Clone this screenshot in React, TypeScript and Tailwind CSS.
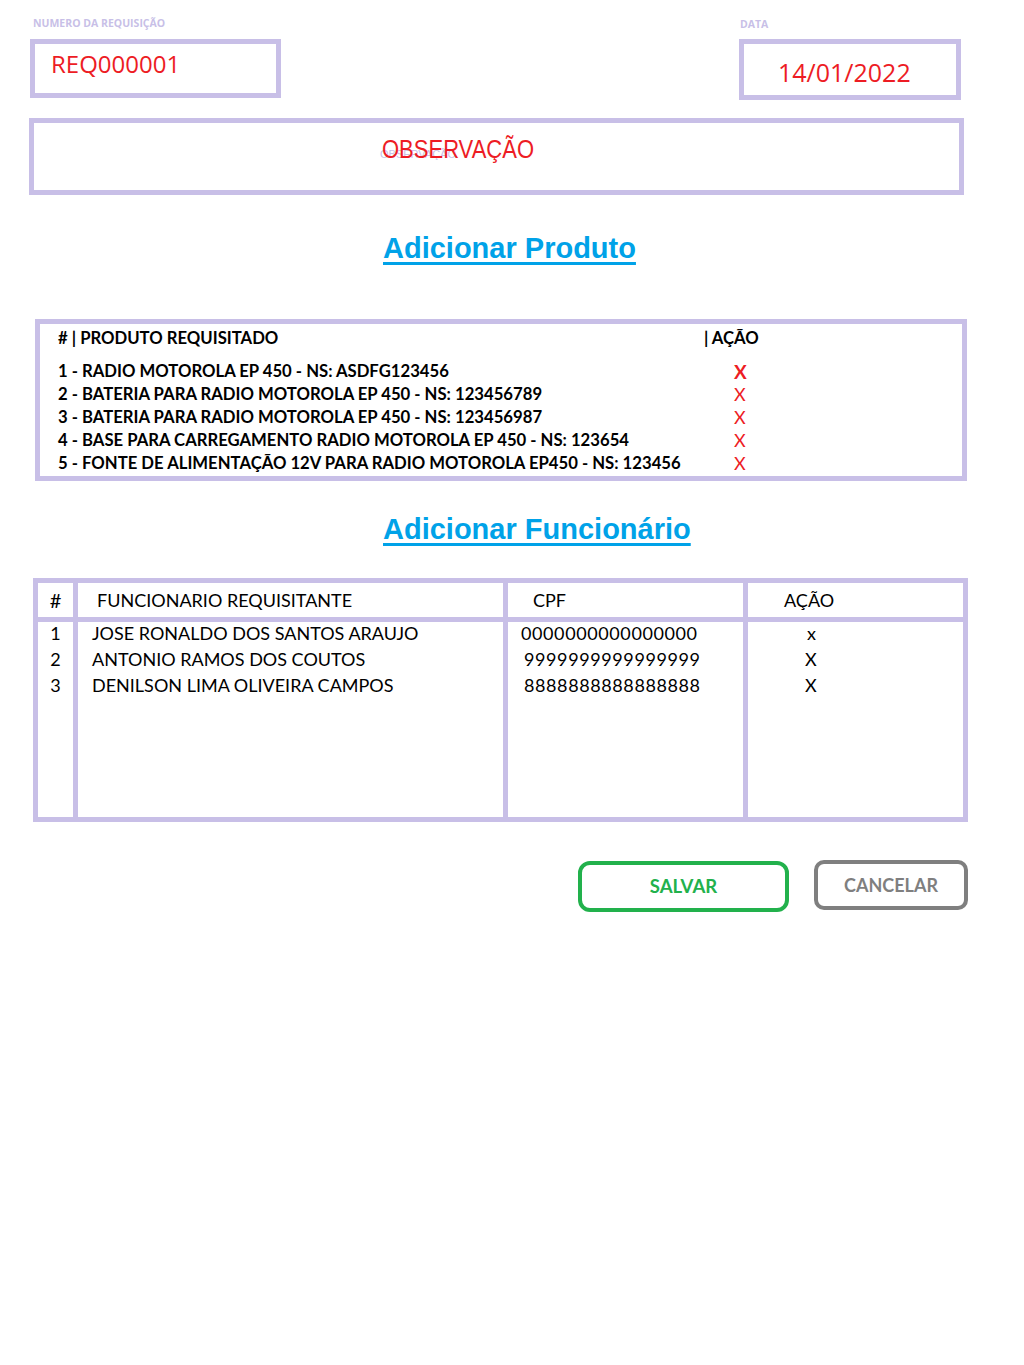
import React from "react";

const LAV = "border-[#c8bfe7]";

const produtos = [
  "1 - RADIO MOTOROLA EP 450 - NS: ASDFG123456",
  "2 - BATERIA PARA RADIO MOTOROLA EP 450 - NS: 123456789",
  "3 - BATERIA PARA RADIO MOTOROLA EP 450 - NS: 123456987",
  "4 - BASE PARA CARREGAMENTO RADIO MOTOROLA EP 450 - NS: 123654",
  "5 - FONTE DE ALIMENTAÇÃO 12V PARA RADIO MOTOROLA EP450 - NS: 123456",
];

const funcionarios = [
  { n: "1", nome: "JOSE RONALDO DOS SANTOS ARAUJO", cpf: "0000000000000000", x: "x", cpfPad: "pl-[13px]" },
  { n: "2", nome: "ANTONIO RAMOS DOS COUTOS", cpf: "9999999999999999", x: "X", cpfPad: "pl-[16px]" },
  { n: "3", nome: "DENILSON LIMA OLIVEIRA CAMPOS", cpf: "8888888888888888", x: "X", cpfPad: "pl-[16px]" },
];

export default function App() {
  return (
    <div className="w-[1024px] h-[1365px] bg-white text-black [font-family:Lato,'Open_Sans',sans-serif]">
      {/* top row */}
      <div className="flex pt-[17px]">
        <div className="ml-[30px] w-[251px]">
          <div className="pl-[3px] h-[13px] text-[10.5px] leading-[13px] font-bold text-[#c8bfe7] [font-family:'Open_Sans',sans-serif]">
            NUMERO DA REQUISIÇÃO
          </div>
          <div className={`mt-[9px] h-[59px] border-[5px] ${LAV} pl-[16px] pt-[4px]`}>
            <div className="text-[24px] leading-[32px] text-[#ed1c24] [font-family:'Open_Sans',sans-serif]">REQ000001</div>
          </div>
        </div>
        <div className="ml-[458px] w-[222px]">
          <div className="pl-[1px] pt-[1px] h-[13px] text-[10.5px] leading-[13px] font-bold text-[#c8bfe7] [font-family:'Open_Sans',sans-serif]">
            DATA
          </div>
          <div className={`mt-[9px] h-[61px] border-[5px] ${LAV} pl-[34px] pt-[12px]`}>
            <div className="text-[25px] leading-[32px] text-[#ed1c24] [font-family:'Open_Sans',sans-serif]">14/01/2022</div>
          </div>
        </div>
      </div>

      {/* observacao */}
      <div className={`relative mt-[18px] ml-[29px] w-[935px] h-[77px] border-[5px] ${LAV} pl-[348px] pt-[12px]`}>
        <div className="absolute left-[346px] top-[25px] text-[11px] leading-[12px] text-[#c8bfe7] [font-family:'Liberation_Sans',sans-serif]">
          OBSERVAÇÃO
        </div>
        <div className="relative origin-left scale-x-[0.88] text-[25px] leading-[28px] text-[#ed1c24] [font-family:'Liberation_Sans',Arial,sans-serif]">
          OBSERVAÇÃO
        </div>
      </div>

      {/* Adicionar Produto */}
      <div className="mt-[36px] ml-[383px] text-[29px] leading-[34px] font-bold text-[#00a2e8] underline underline-offset-[4px] decoration-[3px] [font-family:'Liberation_Sans',Arial,sans-serif]">
        Adicionar Produto
      </div>

      {/* Produtos table */}
      <div className={`mt-[54px] ml-[35px] w-[932px] h-[162px] border-[5px] ${LAV} pl-[18px] pt-[3px] font-bold text-[16.7px]`}>
        <div className="flex leading-[22px]">
          <div className="w-[646px]"># | PRODUTO REQUISITADO</div>
          <div>| AÇÃO</div>
        </div>
        <div className="mt-[11px]">
          {produtos.map((p, i) => (
            <div key={i} className="flex leading-[23px] h-[23px]">
              <div className="w-[646px] whitespace-nowrap">{p}</div>
              <div className={`pl-[30px] text-[#ed1c24] ${i === 0 ? "font-bold text-[19px]" : "font-normal text-[18px]"}`}>X</div>
            </div>
          ))}
        </div>
      </div>

      {/* Adicionar Funcionario */}
      <div className="mt-[31px] ml-[383px] text-[29px] leading-[34px] font-bold text-[#00a2e8] underline underline-offset-[4px] decoration-[3px] [font-family:'Liberation_Sans',Arial,sans-serif]">
        Adicionar Funcionário
      </div>

      {/* Funcionarios table */}
      <div className="mt-[32px] ml-[33px] w-[935px] grid grid-cols-[35px_425px_235px_215px] grid-rows-[34px_195px] gap-[5px] p-[5px] bg-[#c8bfe7] text-[18px]">
        <div className="bg-white flex items-center justify-center text-[20px]">#</div>
        <div className="bg-white flex items-center pl-[19px]">FUNCIONARIO REQUISITANTE</div>
        <div className="bg-white flex items-center pl-[25px]">CPF</div>
        <div className="bg-white flex items-center pl-[36px]">AÇÃO</div>

        <div className="bg-white">
          <div className="-mt-[2px]">
            {funcionarios.map((f) => (
              <div key={f.n} className="h-[26px] leading-[26px] text-center">{f.n}</div>
            ))}
          </div>
        </div>
        <div className="bg-white pl-[14px]">
          <div className="-mt-[2px]">
            {funcionarios.map((f) => (
              <div key={f.n} className="h-[26px] leading-[26px] whitespace-nowrap">{f.nome}</div>
            ))}
          </div>
        </div>
        <div className="bg-white">
          <div className="-mt-[2px]">
            {funcionarios.map((f) => (
              <div key={f.n} className={`h-[26px] leading-[26px] tracking-[0.6px] ${f.cpfPad}`}>{f.cpf}</div>
            ))}
          </div>
        </div>
        <div className="bg-white pl-[57px]">
          <div className="-mt-[2px]">
            {funcionarios.map((f) => (
              <div key={f.n} className={`h-[26px] leading-[26px] ${f.x === "x" ? "pl-[2px]" : ""}`}>{f.x}</div>
            ))}
          </div>
        </div>
      </div>

      {/* buttons */}
      <div className="flex items-start mt-[39px]">
        <div className="ml-[578px] w-[211px] h-[51px] border-[4px] border-[#22b14c] rounded-[12px] flex items-center justify-center text-[18.5px] font-bold text-[#22b14c]">
          SALVAR
        </div>
        <div className="ml-[25px] -mt-[1px] w-[154px] h-[50px] border-[4px] border-[#7f7f7f] rounded-[10px] flex items-center justify-center text-[18px] font-bold text-[#7f7f7f]">
          CANCELAR
        </div>
      </div>
    </div>
  );
}
